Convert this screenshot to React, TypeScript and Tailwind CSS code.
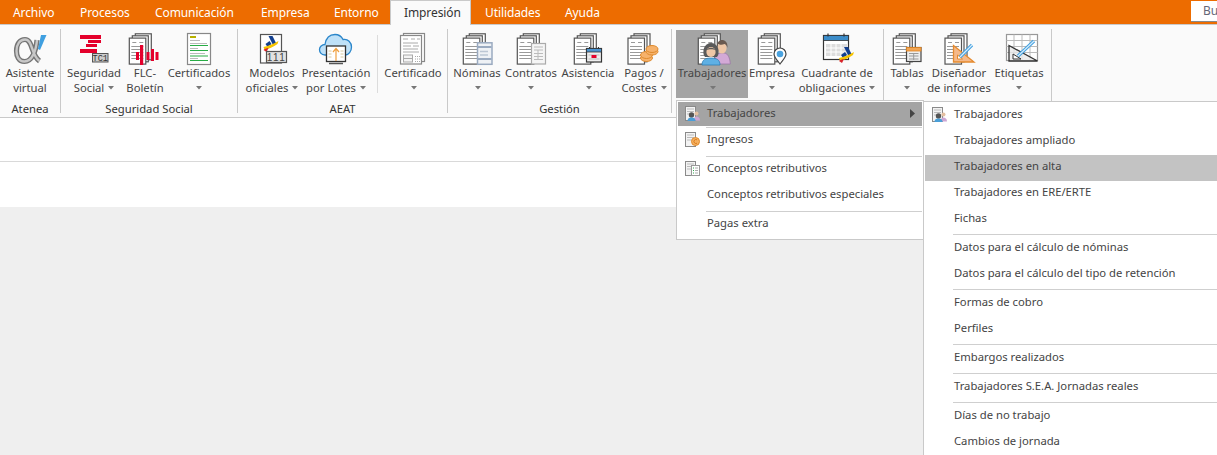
import React from "react";

const D = "#555";

function Stack({ x = 6.3 }: { x?: number }) {
  return (
    <g strokeWidth="1.2">
      <rect x={x + 6} y={3.8} width={16} height={26} fill="#fff" stroke={D} />
      <rect x={x + 3} y={5.8} width={16} height={26} fill="#fff" stroke={D} />
      <rect x={x} y={8.1} width={16.5} height={26} fill="#fff" stroke={D} />
      <g stroke="#999" strokeWidth="1">
        <path d={`M${x + 3} 12.5h4M${x + 10} 12.5h4M${x + 2} 16.5h12M${x + 2} 19.5h12M${x + 2} 22.5h12M${x + 2} 25.5h12M${x + 2} 28.5h12`} />
      </g>
    </g>
  );
}

function People() {
  return (
    <g>
      <path d="M23 34v-6c0-3 3-5 6-5h3c3 0 5 3 6 8l.3 3z" fill="#d3a9d6" stroke="#9a78a3" strokeWidth=".8" />
      <ellipse cx="30" cy="18" rx="4.6" ry="5.6" fill="#efc7a6" />
      <path d="M25 18c-1-6 3-8 5-8s6 1 5.5 8c-1-3-2-4-3-4-2 1-5 1-6 0-1 1-1 2-1.500 4z" fill="#6a5a50" />
      <path d="M10 35c0-5 3-7 9-7s9 2 9 7z" fill="#5fb0e4" stroke="#2f7fb5" strokeWidth=".8" />
      <path d="M13 27c-2-2-2-6-1-9 1-3 4-5 7-5s6 2 7 5c1 3 1 7-1 9z" fill="#5a5a5a" />
      <ellipse cx="19" cy="22" rx="4.600" ry="5" fill="#efc7a6" />
      <path d="M14.500 20c2-3 7-3 9 0-2-1-7-1-9 0z" fill="#5a5a5a" />
    </g>
  );
}

function Aeat({ x, y, s = 1 }: { x: number; y: number; s?: number }) {
  return (
    <g transform={`translate(${x} ${y}) scale(${s})`}>
      <path d="M5 0h4l4 8h-4z" fill="#123f8f" />
      <path d="M2 8l4-3 2 3-4 3z" fill="#123f8f" />
      <path d="M0 11c5-1 10-3 15-6l-1 3C10 11 5 13 1 14z" fill="#f6c400" />
      <path d="M0 14c1-1 3-2 5-2l-2 4z" fill="#d8232a" />
    </g>
  );
}

const alphaPath = "M27 10C26 21 22 31.500 14.500 31.500 8.500 31.500 6.500 26 6.500 21 6.500 14 10 9.500 15 9.500c8 0 6 16 14.500 21.500";

const icons: Record<string, React.ReactNode> = {
  alpha: (
    <g fill="none">
      <path d={alphaPath} stroke="#757575" strokeWidth="5.200" />
      <path d={alphaPath} stroke="#c8c8c8" strokeWidth="2.400" />
      <path d="M31 5h5.500l-6.500 15-2-1z" fill="#3f9fe0" />
    </g>
  ),
  tc1: (
    <g>
      <path d="M6 5h21v4H6zM14 10h13v3H14zM12 14h11v3H12zM6 19h17v4H6z" fill="#e4002b" />
      <rect x="18.500" y="23.500" width="15.500" height="8.500" fill="#ccc" stroke={D} />
      <text x="26.200" y="31" textAnchor="middle" fontSize="8.500" fontFamily="Liberation Mono" fill="#333">TC1</text>
    </g>
  ),
  flc: (
    <g>
      <Stack x={4.3} />
      <path d="M11 22h3v8h-3zM15 15h3.200v20H15zM21.500 22h3v8h-3zM26 19h3v12h-3zM30.500 22h3v8h-3z" fill="#e4002b" />
    </g>
  ),
  cert: (
    <g>
      <rect x="8.500" y="3.500" width="23" height="31" fill="#fff" stroke="#888" strokeWidth="1.200" />
      <path d="M11 6h6v2h-6z" fill="#b7b100" />
      <path d="M11 10.500h10M11 13.500h17M11 18.500h8M11 23.500h15M11 28.500h8" stroke="#bbb" />
      <path d="M11 15.500h18M11 20.500h18M11 26h18M11 30.500h18" stroke="#28ad45" strokeWidth="1.100" />
    </g>
  ),
  modelos: (
    <g>
      <rect x="8.500" y="4.500" width="21" height="28.500" fill="#fff" stroke={D} strokeWidth="1.200" />
      <Aeat x={11.500} y={6} s={1} />
      <rect x="14.500" y="21.500" width="20" height="11" fill="#e2e2e2" stroke={D} strokeWidth="1.200" />
      <text x="24.500" y="31" textAnchor="middle" fontSize="10" letterSpacing="1.500" fontFamily="Liberation Sans" fill="#444">111</text>
    </g>
  ),
  pres: (
    <g>
      <path d="M9 25c-4 0-5.500-3-5.500-5.500S6 14.500 9 14.500C10 8 14 4.500 19 4.500c4 0 6.500 2 8 5 5-1 8.500 3 8.500 7.500s-3 8-6 8z" fill="#bfe1f8" stroke="#2b86ca" strokeWidth="1.300" />
      <rect x="10.500" y="16" width="19" height="15.500" fill="#fff" stroke="#333" strokeWidth="1.300" />
      <path d="M13 33.500h14" stroke="#555" strokeWidth="1.500" />
      <path d="M20 31V19M17 22l3-3.500 3 3.500" stroke="#f0a040" strokeWidth="1.200" fill="none" />
      <path d="M12.500 21h3M12.500 24h3M12.500 27h3M24.500 21h3M24.500 24h3M24.500 27h3" stroke="#d8c9a0" />
    </g>
  ),
  certif: (
    <g stroke="#888" fill="#fff">
      <rect x="10.500" y="3.500" width="21" height="28" strokeWidth="1.200" />
      <rect x="7.500" y="5.500" width="21" height="28.500" strokeWidth="1.200" />
      <path d="M10 9h5M18 9h4M24 9h3M10 13h15M10 16h8M20 16h6M10 19h15M10 22h16" stroke="#aaa" fill="none" />
      <rect x="10.500" y="25" width="9" height="7" stroke="#aaa" fill="#f4f4f4" />
      <path d="M10.500 28.500h9" stroke="#aaa" />
      <path d="M22 26.500h5M22 29h5M22 31.500h5" stroke="#aaa" strokeDasharray="1 1" />
    </g>
  ),
  nominas: (
    <g>
      <Stack />
      <rect x="20.500" y="12.800" width="14.500" height="21.500" fill="#eef1f5" stroke="#9aaac0" strokeWidth="1.500" />
      <path d="M20.500 17h14M20.500 29h14" stroke="#9aaac0" strokeWidth="2" />
      <path d="M23 21.500h8M23 25h8" stroke="#bbc6d4" strokeWidth="1.500" />
    </g>
  ),
  contratos: (
    <g>
      <Stack />
      <rect x="20.500" y="13.500" width="14" height="20.500" fill="#f5f5f5" stroke="#aaa" strokeWidth="1.200" />
      <path d="M23 17h9M23 20h9M23 23.500h9M23 26.500h9M23 29.500h9M27 20v10" stroke="#bbb" />
    </g>
  ),
  asistencia: (
    <g>
      <Stack />
      <rect x="18.500" y="18.500" width="15" height="13.500" fill="#eee" stroke="#333" strokeWidth="1.200" />
      <rect x="18.500" y="18.500" width="15" height="3.500" fill="#4a93cf" stroke="#333" strokeWidth=".8" />
      <path d="M21.500 17v2M30.500 17v2" stroke="#333" />
      <path d="M20.500 25h11M20.500 29h11" stroke="#bbb" />
      <rect x="23.500" y="25" width="5" height="3" fill="#e4002b" />
    </g>
  ),
  pagos: (
    <g>
      <Stack x={4} />
      <g fill="#f6b26b" stroke="#df8a2c">
        <ellipse cx="22.500" cy="28" rx="6" ry="3.500" />
        <ellipse cx="22.500" cy="25" rx="6" ry="3.500" />
        <ellipse cx="28" cy="21.500" rx="6" ry="3.500" />
        <ellipse cx="28" cy="19" rx="6" ry="3.500" />
      </g>
    </g>
  ),
  trab: (
    <g>
      <Stack />
      <People />
    </g>
  ),
  empresa: (
    <g>
      <Stack />
      <path d="M28 34c-3-4-6-7-6-10a6 6 0 0 1 12 0c0 3-3 6-6 10z" fill="#fff" stroke="#444" strokeWidth="1.200" />
      <circle cx="28" cy="24" r="3.300" fill="#4aa3e0" />
    </g>
  ),
  cuadrante: (
    <g>
      <rect x="6.500" y="5.500" width="25" height="24" fill="#fff" stroke="#333" strokeWidth="1.200" />
      <rect x="6.500" y="5.500" width="25" height="5" fill="#3b8cc9" stroke="#333" strokeWidth=".8" />
      <path d="M11 3.500v3M27 3.500v3" stroke="#333" strokeWidth="1.200" />
      <path d="M9 14h21v12H9z" fill="#ddd" />
      <path d="M9 18h21M9 22h21M14 14v12M19 14v12M24 14v12" stroke="#fff" />
      <Aeat x={22} y={17} s={1} />
    </g>
  ),
  tablas: (
    <g>
      <Stack />
      <rect x="19.500" y="17.500" width="14.500" height="14" fill="#eee" stroke="#444" strokeWidth="1.200" />
      <rect x="19.500" y="17.500" width="14.500" height="3.500" fill="#f2a654" stroke="#e5861f" strokeWidth=".8" />
      <path d="M22 23.500h9.500M22 26h9.500M22 29h9.500M26.700 23v7" stroke="#999" />
    </g>
  ),
  disenador: (
    <g>
      <Stack x={6} />
      <path d="M14.500 15.500L35 32H14.500z" fill="#f5b98a" stroke="#e58a2e" strokeWidth="1.300" />
      <path d="M18.500 25v4h5z" fill="#fff" stroke="#e58a2e" />
      <path d="M21 27l12-12" stroke="#3f9fe0" strokeWidth="3.200" />
      <path d="M21 27l12-12" stroke="#d7ecfb" strokeWidth="1.200" />
    </g>
  ),
  etiquetas: (
    <g>
      <rect x="7.500" y="4.500" width="31" height="26" fill="#fff" stroke="#999" strokeWidth="1.200" />
      <path d="M7.500 10.500h31M7.500 16.500h31M7.500 22.500h31M15 4.500v26M23 4.500v26M31 4.500v26" stroke="#bbb" />
      <path d="M10 15.500L38.500 31H10z" fill="#e8e8e8" fillOpacity=".8" stroke="#333" strokeWidth="1.300" />
      <path d="M14 24v5h8z" fill="#fff" stroke="#333" />
      <path d="M19 26L35 11" stroke="#3f9fe0" strokeWidth="3.200" />
      <path d="M19 26L35 11" stroke="#d7ecfb" strokeWidth="1.200" />
    </g>
  ),
};

function Caret() {
  return (
    <svg width="6" height="4" viewBox="0 0 6 4" className="inline-block align-middle ml-[1px]">
      <path d="M0 0h6L3 3.500z" fill="#777" />
    </svg>
  );
}

function Btn({ w, icon, l1, l2, active, noCaret }: { w: number; icon: string; l1: string; l2?: string; active?: boolean; noCaret?: boolean }) {
  return (
    <div style={{ width: w }} className={`h-[68px] shrink-0 flex flex-col items-center whitespace-nowrap ${active ? "bg-[#a4a4a4]" : ""}`}>
      <svg width="40" height="35" viewBox="0 0 40 35" className="shrink-0 overflow-visible">{icons[icon]}</svg>
      <div className="leading-[15px] text-center">
        <div>{l1}</div>
        <div className="h-[15px] flex items-center justify-center gap-[3px]">
          {l2 && <span>{l2}</span>}
          {!noCaret && <Caret />}
        </div>
      </div>
    </div>
  );
}

function Group({ w, pl = 0, label, children }: { w: number; pl?: number; label: string; children: React.ReactNode }) {
  return (
    <div style={{ width: w }} className="h-[84px] shrink-0 flex flex-col border-r border-[#c9c9c9]">
      <div style={{ paddingLeft: pl }} className="flex items-start pt-[1px]">{children}</div>
      <div className="mt-[4px] text-center leading-[14px] text-[#333]">{label}</div>
    </div>
  );
}

function MiniDoc() {
  return (
    <g>
      <rect x="1.500" y="1.500" width="10" height="14" fill="#f3f3f3" stroke="#8a8a8a" />
      <path d="M3 4h7M3 6.500h7M3 9h7" stroke="#bbb" />
    </g>
  );
}

function MiniTrab() {
  return (
    <svg width="17" height="17" viewBox="0 0 17 17" className="shrink-0">
      <MiniDoc />
      <circle cx="12.500" cy="8.500" r="2" fill="#e4bfa0" />
      <path d="M9.500 15.500c0-3 1.500-4 3-4s3.500 1 3.500 4z" fill="#cda6d4" />
      <circle cx="7.500" cy="10" r="2.700" fill="#555" />
      <path d="M3.500 16c0-2.500 1.500-3.500 4-3.500s4 1 4 3.500z" fill="#4a9fd8" />
    </svg>
  );
}

function MiniCoin() {
  return (
    <svg width="17" height="17" viewBox="0 0 17 17" className="shrink-0">
      <MiniDoc />
      <circle cx="11.500" cy="10.500" r="4" fill="#f5b060" stroke="#e08a2c" />
      <path d="M13 8.800a2 2 0 1 0 0 3.400" stroke="#d97a1a" fill="none" />
    </svg>
  );
}

function MiniConc() {
  return (
    <svg width="17" height="17" viewBox="0 0 17 17" className="shrink-0">
      <MiniDoc />
      <rect x="7.500" y="5.500" width="8" height="10" fill="#fff" stroke="#999" />
      <path d="M9 8h1M9 10.500h1M9 13h1" stroke="#2ea84a" />
      <path d="M11 8h3M11 10.500h3M11 13h3" stroke="#aaa" />
    </svg>
  );
}

function Row({ text, icon, cls = "", h = 26, arrow, tight }: { text: string; icon?: React.ReactNode; cls?: string; h?: number; arrow?: boolean; tight?: boolean }) {
  return (
    <div style={{ height: h }} className={`flex items-start leading-[16px] whitespace-nowrap ${tight ? "pt-[2px]" : "pt-[3px]"} ${cls}`}>
      <div className="w-[29px] shrink-0 pl-[6px]">{icon}</div>
      <span>{text}</span>
      {arrow && (
        <svg width="5" height="9" viewBox="0 0 5 9" className="ml-auto mr-[7px] mt-[4px]">
          <path d="M0 0l5 4.500L0 9z" fill="#444" />
        </svg>
      )}
    </div>
  );
}

function Sep() {
  return (
    <div className="h-[3px] flex items-start pl-[28px] pt-[1px]">
      <div className="h-px w-full bg-[#cfcfcf]" />
    </div>
  );
}

const tabs: [string, number, number][] = [
  ["Archivo", 66, 13],
  ["Procesos", 75, 14],
  ["Comunicación", 106, 14],
  ["Empresa", 73, 14],
  ["Entorno", 70, 14],
];

export default function App() {
  return (
    <div
      className="relative h-[455px] w-[1217px] overflow-hidden bg-[#efefef] text-[#444] text-[11.25px]"
      style={{ fontFamily: '"Noto Sans", "Open Sans", sans-serif' }}
    >
      {/* Tab strip */}
      <div className="h-[25px] flex bg-[#ed6c00] border-b border-[#c9c9c9] text-white text-[12px] tracking-[-0.1px] leading-[25px]">
        {tabs.map(([t, w, p]) => (
          <div key={t} style={{ width: w, paddingLeft: p }} className="h-[25px] shrink-0">{t}</div>
        ))}
        <div className="h-[25px] w-[81px] shrink-0 pl-[13px] bg-[#fafafa] border-x border-t border-[#c9c9c9] text-[#333] leading-[24px]">Impresión</div>
        <div className="w-[80px] pl-[14px] shrink-0">Utilidades</div>
        <div className="w-[80px] pl-[14px] shrink-0">Ayuda</div>
        <div className="ml-auto mt-[1px] h-[21px] w-[26px] pl-[12px] bg-white border-b border-[#888] text-[#667] leading-[19px] overflow-hidden">Bus</div>
      </div>

      {/* Ribbon */}
      <div className="h-[93px] bg-[#fafafa] border-b border-[#c9c9c9] flex pt-[4px] text-[#444]">
        <Group w={61} label="Atenea">
          <Btn w={60} icon="alpha" l1="Asistente" l2="virtual" noCaret />
        </Group>
        <Group w={177} pl={3} label="Seguridad Social">
          <Btn w={60} icon="tc1" l1="Seguridad" l2="Social" />
          <Btn w={42} icon="flc" l1="FLC-" l2="Boletín" noCaret />
          <Btn w={66} icon="cert" l1="Certificados" />
        </Group>
        <Group w={210} pl={7} label="AEAT">
          <Btn w={54} icon="modelos" l1="Modelos" l2="oficiales" />
          <Btn w={74} icon="pres" l1="Presentación" l2="por Lotes" />
          <div className="w-px h-[58px] mt-[5px] ml-[4px] mr-[2px] bg-[#dcdcdc] shrink-0" />
          <Btn w={66} icon="certif" l1="Certificado" />
        </Group>
        <Group w={224} pl={3} label="Gestión">
          <Btn w={52} icon="nominas" l1="Nóminas" />
          <Btn w={56} icon="contratos" l1="Contratos" />
          <Btn w={58} icon="asistencia" l1="Asistencia" />
          <Btn w={54} icon="pagos" l1="Pagos /" l2="Costes" />
        </Group>
        <Group w={212} pl={4} label="">
          <Btn w={72} icon="trab" l1="Trabajadores" active />
          <Btn w={48} icon="empresa" l1="Empresa" />
          <Btn w={82} icon="cuadrante" l1="Cuadrante de" l2="obligaciones" />
        </Group>
        <Group w={168} pl={1} label="">
          <Btn w={44} icon="tablas" l1="Tablas" />
          <Btn w={60} icon="disenador" l1="Diseñador" l2="de informes" noCaret />
          <Btn w={60} icon="etiquetas" l1="Etiquetas" />
        </Group>
      </div>

      {/* Content */}
      <div className="h-[44px] bg-white border-b border-[#d9d9d9]" />
      <div className="h-[45px] bg-white" />

      {/* First dropdown */}
      <div className="absolute left-[676px] top-[100px] w-[248px] h-[140px] bg-white border border-[#c9c9c9] p-px text-[#444]">
        <Row text="Trabajadores" icon={<MiniTrab />} cls="bg-[#a4a4a4]" h={24} arrow />
        <Sep />
        <Row text="Ingresos" icon={<MiniCoin />} tight />
        <Sep />
        <Row text="Conceptos retributivos" icon={<MiniConc />} tight />
        <Row text="Conceptos retributivos especiales" tight />
        <Sep />
        <Row text="Pagas extra" tight />
      </div>

      {/* Sub menu */}
      <div className="absolute left-[923px] top-[101px] w-[300px] h-[360px] bg-white border border-[#c9c9c9] pl-px pt-px text-[#444]">
        <Row text="Trabajadores" icon={<MiniTrab />} />
        <Row text="Trabajadores ampliado" />
        <Row text="Trabajadores en alta" cls="bg-[#c3c3c3]" />
        <Row text="Trabajadores en ERE/ERTE" />
        <Row text="Fichas" />
        <Sep />
        <Row text="Datos para el cálculo de nóminas" />
        <Row text="Datos para el cálculo del tipo de retención" />
        <Sep />
        <Row text="Formas de cobro" />
        <Row text="Perfiles" />
        <Sep />
        <Row text="Embargos realizados" />
        <Sep />
        <Row text="Trabajadores S.E.A. Jornadas reales" />
        <Sep />
        <Row text="Días de no trabajo" />
        <Row text="Cambios de jornada" />
      </div>
    </div>
  );
}
